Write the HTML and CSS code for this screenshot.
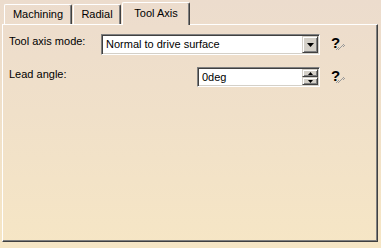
FILE: index.html
```html
<!DOCTYPE html>
<html lang="en">
<head>
    <meta charset="UTF-8">
    <title>Tool Axis</title>
    <link rel="stylesheet" href="styles.css">
</head>
<body>

<div class="dialog">
    <div class="tabs">
        <div class="tab tab-wide">Machining</div>
        <div class="tab tab-narrow">Radial</div>
        <div class="tab tab-wide active">Tool Axis</div>
    </div>

    <div class="panel">
        <div class="form-grid">
            <label class="field-label">Tool axis mode:</label>
            <div class="combo">
                <span class="field-text">Normal to drive surface</span>
                <span class="btn drop-btn">
                    <svg width="7" height="4" viewBox="0 0 7 4"><path d="M0 0h7L3.5 4z" fill="#000"/></svg>
                </span>
            </div>
            <span class="help">?<svg class="help-tail" width="9" height="6" viewBox="0 0 9 6">
                <g fill="#9a9a9a">
                    <rect x="0" y="5" width="1" height="1"/><rect x="2" y="5" width="1" height="1"/>
                    <rect x="1" y="4" width="1" height="1"/><rect x="3" y="4" width="1" height="1"/>
                    <rect x="2" y="3" width="1" height="1"/><rect x="4" y="3" width="1" height="1"/>
                    <rect x="5" y="2" width="1" height="1"/><rect x="7" y="2" width="1" height="1"/>
                    <rect x="6" y="1" width="1" height="1"/><rect x="8" y="1" width="1" height="1"/>
                    <rect x="7" y="0" width="1" height="1"/>
                </g>
            </svg></span>

            <label class="field-label">Lead angle:</label>
            <div class="spinner">
                <span class="field-text">0deg</span>
                <span class="spin-btns">
                    <span class="btn spin-btn">
                        <svg width="5" height="3" viewBox="0 0 5 3"><path d="M2.5 0L5 3H0z" fill="#000"/></svg>
                    </span>
                    <span class="btn spin-btn">
                        <svg width="5" height="3" viewBox="0 0 5 3"><path d="M0 0h5L2.5 3z" fill="#000"/></svg>
                    </span>
                </span>
            </div>
            <span class="help">?<svg class="help-tail" width="9" height="6" viewBox="0 0 9 6">
                <g fill="#9a9a9a">
                    <rect x="0" y="5" width="1" height="1"/><rect x="2" y="5" width="1" height="1"/>
                    <rect x="1" y="4" width="1" height="1"/><rect x="3" y="4" width="1" height="1"/>
                    <rect x="2" y="3" width="1" height="1"/><rect x="4" y="3" width="1" height="1"/>
                    <rect x="5" y="2" width="1" height="1"/><rect x="7" y="2" width="1" height="1"/>
                    <rect x="6" y="1" width="1" height="1"/><rect x="8" y="1" width="1" height="1"/>
                    <rect x="7" y="0" width="1" height="1"/>
                </g>
            </svg></span>
        </div>
    </div>
</div>

</body>
</html>
```

FILE: styles.css
```css
html, body {
    margin: 0;
    padding: 0;
    width: 381px;
    height: 248px;
    overflow: hidden;
}
body {
    font-family: "Liberation Sans", Arial, sans-serif;
    font-size: 11px;
    line-height: 13px;
    color: #000;
    background: linear-gradient(180deg, #ecdccd 0%, #f0e0c9 45%, #f6e6c5 100%) fixed;
}

/* tab strip */
.tabs {
    display: flex;
    align-items: flex-end;
    height: 24px;
    padding-left: 4px;
}
.tab {
    box-sizing: border-box;
    height: 20px;
    margin-right: 1px;
    padding-top: 3px;
    text-align: center;
    border-top: 1px solid #fff;
    border-left: 1px solid #fff;
    border-right: 1px solid #404040;
    border-radius: 2px 2px 0 0;
    box-shadow: inset -1px 0 #808080;
}
.tab-wide { width: 68px; }
.tab-narrow { width: 48px; }
.tab.active {
    position: relative;
    z-index: 1;
    height: 23px;
    margin-bottom: -1px;
    padding-top: 4px;
    background: linear-gradient(180deg, #ecdccd 0%, #f0e0c9 45%, #f6e6c5 100%) fixed;
}

/* page body */
.panel {
    box-sizing: border-box;
    height: 218px;
    margin: 0 3px 0 2px;
    padding: 9px 0 0 6px;
    border: 1px solid;
    border-color: #fff #404040 #404040 #fff;
    box-shadow: inset -1px -1px #808080;
}
.form-grid {
    display: grid;
    grid-template-columns: 92px 219px auto;
    row-gap: 12px;
}
.field-label {
    align-self: start;
    padding-top: 1px;
}

/* sunken fields */
.combo, .spinner {
    box-sizing: border-box;
    display: flex;
    align-items: stretch;
    padding: 1px;
    background: #fff;
    border: 1px solid;
    border-color: #808080 #fff #fff #808080;
    box-shadow: inset 1px 1px #404040, inset -1px -1px #d4d0c8;
}
.combo {
    height: 21px;
}
.spinner {
    width: 123px;
    height: 20px;
    justify-self: end;
}
.field-text {
    flex: 1;
    display: flex;
    align-items: center;
    padding-left: 3px;
    white-space: nowrap;
}

/* raised buttons */
.btn {
    box-sizing: border-box;
    display: flex;
    align-items: center;
    justify-content: center;
    background: #d4d0c8;
    border: 1px solid;
    border-color: #d4d0c8 #404040 #404040 #d4d0c8;
    box-shadow: inset 1px 1px #fff, inset -1px -1px #808080;
}
.drop-btn {
    width: 16px;
}
.spin-btns {
    display: flex;
    flex-direction: column;
    width: 16px;
}
.spin-btn {
    flex: 1;
}

/* help marker */
.help {
    position: relative;
    align-self: start;
    margin: 2px 0 0 11px;
    font-weight: bold;
    font-size: 15px;
    line-height: 13px;
    width: 16px;
}
.help-tail {
    position: absolute;
    left: 5px;
    top: 8px;
}
```
